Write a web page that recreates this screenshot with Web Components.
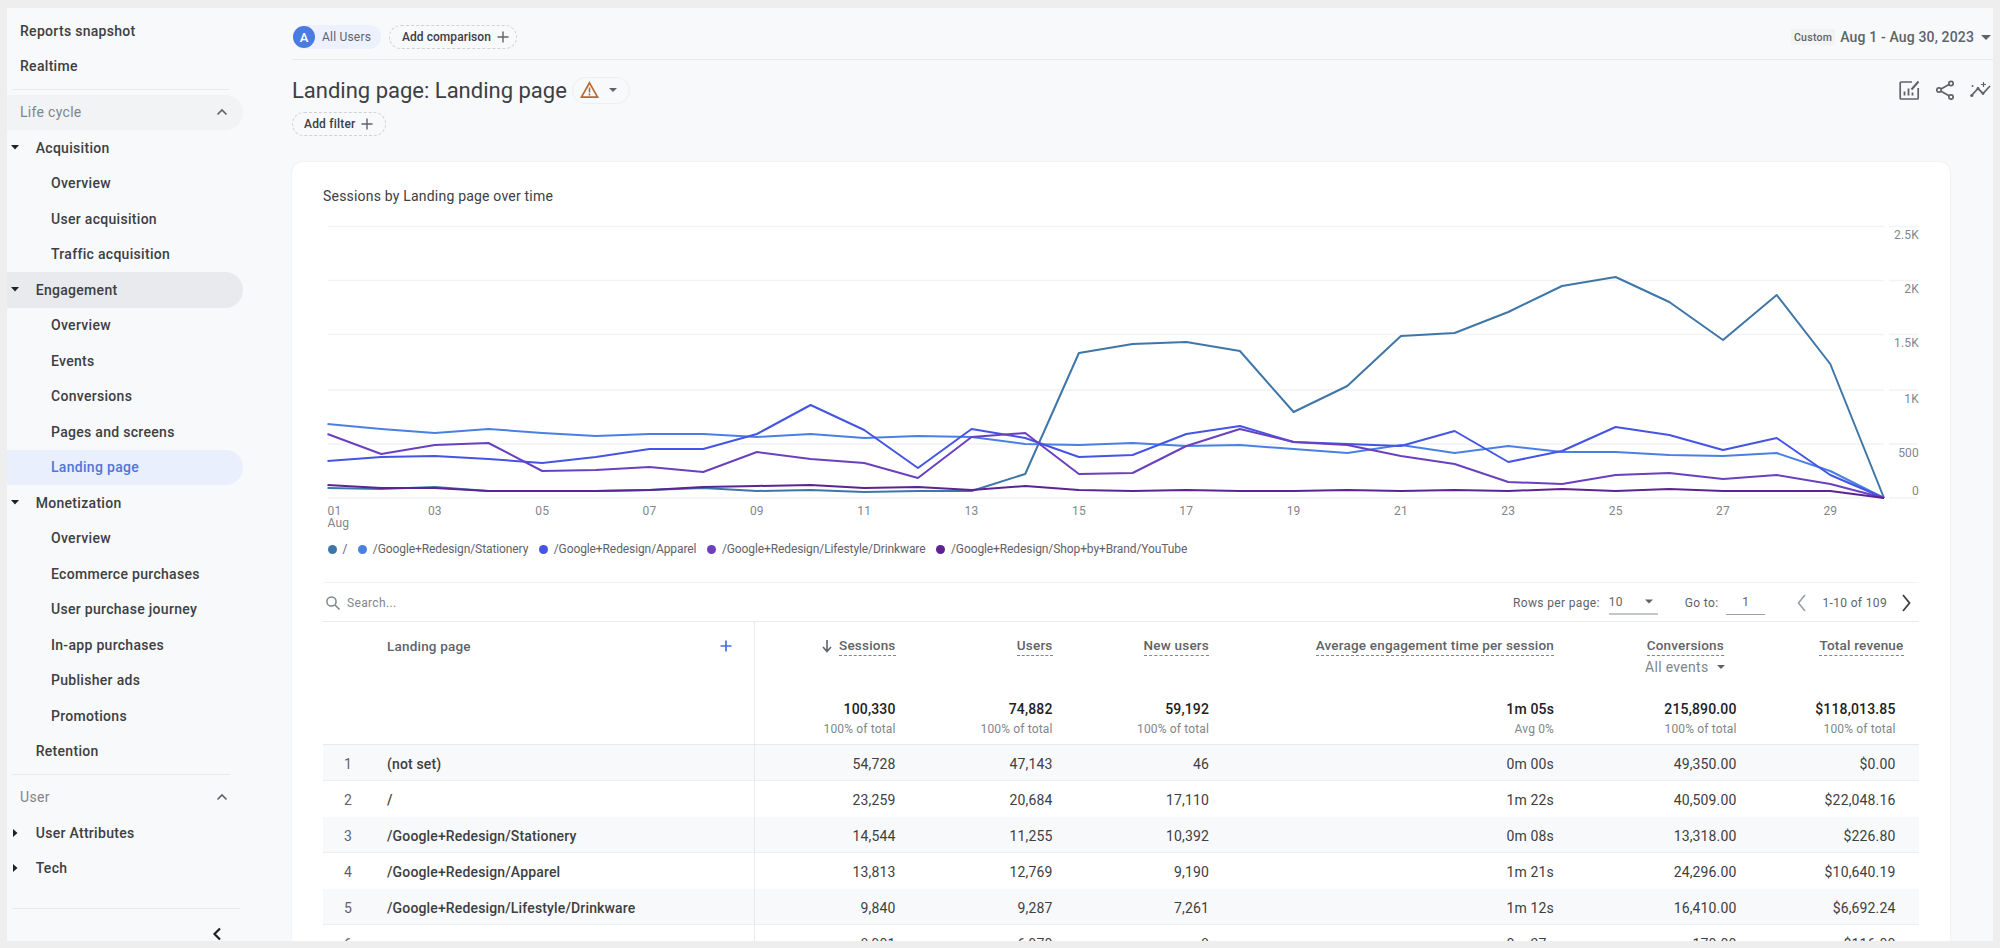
<!DOCTYPE html>
<html>
<head>
<meta charset="utf-8">
<title>Landing page</title>
<style>
  html, body { margin: 0; height: 100%; overflow: hidden; background: #eeeeee; }
  body { font-family: Roboto, "Noto Sans", sans-serif; }
</style>
</head>
<body>
<ga-app>
  <ga-sidebar slot="sidebar">
    <ga-nav-item level="0">Reports snapshot</ga-nav-item>
    <ga-nav-item level="0">Realtime</ga-nav-item>
    <ga-nav-divider></ga-nav-divider>
    <ga-nav-item level="0" heading chevron state="hover">Life cycle</ga-nav-item>
    <ga-nav-item level="1" caret="down">Acquisition</ga-nav-item>
    <ga-nav-item level="2">Overview</ga-nav-item>
    <ga-nav-item level="2">User acquisition</ga-nav-item>
    <ga-nav-item level="2">Traffic acquisition</ga-nav-item>
    <ga-nav-item level="1" caret="down" state="open">Engagement</ga-nav-item>
    <ga-nav-item level="2">Overview</ga-nav-item>
    <ga-nav-item level="2">Events</ga-nav-item>
    <ga-nav-item level="2">Conversions</ga-nav-item>
    <ga-nav-item level="2">Pages and screens</ga-nav-item>
    <ga-nav-item level="2" state="active">Landing page</ga-nav-item>
    <ga-nav-item level="1" caret="down">Monetization</ga-nav-item>
    <ga-nav-item level="2">Overview</ga-nav-item>
    <ga-nav-item level="2">Ecommerce purchases</ga-nav-item>
    <ga-nav-item level="2">User purchase journey</ga-nav-item>
    <ga-nav-item level="2">In-app purchases</ga-nav-item>
    <ga-nav-item level="2">Publisher ads</ga-nav-item>
    <ga-nav-item level="2">Promotions</ga-nav-item>
    <ga-nav-item level="1" caret="none">Retention</ga-nav-item>
    <ga-nav-divider></ga-nav-divider>
    <ga-nav-item level="0" heading chevron>User</ga-nav-item>
    <ga-nav-item level="1" caret="right">User Attributes</ga-nav-item>
    <ga-nav-item level="1" caret="right">Tech</ga-nav-item>
  </ga-sidebar>
  <ga-topbar></ga-topbar>
  <ga-title-row></ga-title-row>
  <ga-card>
    <ga-line-chart></ga-line-chart>
    <ga-legend></ga-legend>
    <ga-table-toolbar></ga-table-toolbar>
    <ga-table></ga-table>
  </ga-card>
</ga-app>

<script>
const PLUS = `<svg width="12" height="12" viewBox="0 0 12 12"><path d="M6 .5v11M.5 6h11" stroke="#5f6368" stroke-width="1.4" fill="none"/></svg>`;
const CARET = `<svg width="10" height="5" viewBox="0 0 10 5"><path d="M0 0h10L5 5z" fill="#5f6368"/></svg>`;

// colours and y values were read off the chart, in page pixels (one value per day of August)
const SERIES = [
  { name: '/', color: '#3f76a8', y: [489,490,488,492,492,492,491,489,492,491,493,492,492,475,354,345,343,352,413,387,337,334,313,287,278,303,341,296,365,499] },
  { name: '/Google+Redesign/Stationery', color: '#4a80e4', y: [425,430,434,430,434,437,435,435,438,435,439,437,438,445,446,444,447,446,450,454,446,454,447,453,453,456,457,454,472,499] },
  { name: '/Google+Redesign/Apparel', color: '#4554e2', y: [462,458,457,460,464,458,450,450,435,406,431,469,430,439,458,456,435,427,443,445,447,432,463,452,428,436,451,439,476,499] },
  { name: '/Google+Redesign/Lifestyle/Drinkware', color: '#6a40c0', y: [435,455,446,444,472,471,468,473,453,460,464,479,438,434,475,474,447,430,443,446,457,465,483,485,476,474,480,476,485,499] },
  { name: '/Google+Redesign/Shop+by+Brand/YouTube', color: '#5b2492', y: [486,489,489,492,492,492,491,488,487,486,489,488,491,487,491,492,491,492,492,491,492,491,492,490,492,490,492,492,492,499] }
];

class GaApp extends HTMLElement {
  constructor() {
    super();
    this.attachShadow({ mode: 'open' });
    this.shadowRoot.innerHTML = `
      <style>
        :host { display: block; box-sizing: border-box; height: 948px; padding: 8px 7px 7px; }
        .frame { height: 933px; background: #f8f9fb; display: grid; grid-template-columns: 285px 1fr; overflow: hidden; }
        .main { min-width: 0; display: flex; flex-direction: column; }
      </style>
      <div class="frame">
        <slot name="sidebar"></slot>
        <div class="main"><slot></slot></div>
      </div>`;
  }
}

class GaSidebar extends HTMLElement {
  constructor() {
    super();
    this.attachShadow({ mode: 'open' });
    this.shadowRoot.innerHTML = `
      <style>
        :host { display: block; padding-top: 5px; }
        .foot { margin: 21.5px 52px 0 5px; border-top: 1px solid #e8eaed; padding: 18px 18px 0 0; display: flex; justify-content: flex-end; }
      </style>
      <slot></slot>
      <div class="foot">
        <svg width="10" height="14" viewBox="0 0 10 14"><path d="M8 1.5L2.5 7 8 12.5" stroke="#202124" stroke-width="2.2" fill="none"/></svg>
      </div>`;
  }
}

class GaNavDivider extends HTMLElement {
  constructor() {
    super();
    this.attachShadow({ mode: 'open' });
    this.shadowRoot.innerHTML = `
      <style>
        :host { display: flex; align-items: center; height: 10.5px; padding: 0 62px 0 5px; }
        div { flex: 1; height: 1px; background: #e8eaed; }
      </style>
      <div></div>`;
  }
}

class GaNavItem extends HTMLElement {
  constructor() {
    super();
    this.attachShadow({ mode: 'open' });
    const caret = this.getAttribute('caret');
    let icon = '';
    if (caret === 'down') icon = '<svg width="8" height="5" viewBox="0 0 8 5"><path d="M0 0h8L4 4.5z" fill="#202124"/></svg>';
    if (caret === 'right') icon = '<svg width="5" height="8" viewBox="0 0 5 8"><path d="M0 0v8l4.5-4z" fill="#202124"/></svg>';
    const chevron = this.hasAttribute('chevron')
      ? '<svg class="chevron" width="12" height="8" viewBox="0 0 12 8"><path d="M1.5 6.5L6 2l4.5 4.5" stroke="#5f6368" stroke-width="1.6" fill="none"/></svg>'
      : '';
    this.shadowRoot.innerHTML = `
      <style>
        :host {
          display: flex; align-items: center; box-sizing: border-box;
          height: 35.5px; width: 236px; border-radius: 0 18px 18px 0;
          font-size: 14px; letter-spacing: 0.3px; color: #3c4043; font-weight: 500;
        }
        :host([level="0"]) { padding-left: 13px; }
        :host([level="1"]) { padding-left: 4px; }
        :host([level="2"]) { padding-left: 44px; }
        :host([heading]) { color: #80868b; font-weight: 400; }
        :host([state="hover"]) { background: #f1f3f4; }
        :host([state="open"]) { background: #e8eaed; }
        :host([state="active"]) { background: #e9effc; color: #4f76d8; }
        .caret { display: none; width: 8px; margin-right: 16.7px; justify-content: center; }
        :host([caret]) .caret { display: flex; }
        .chevron { margin-left: auto; margin-right: 15px; }
      </style>
      <span class="caret">${icon}</span>
      <slot></slot>
      ${chevron}`;
  }
}

class GaTopbar extends HTMLElement {
  constructor() {
    super();
    this.attachShadow({ mode: 'open' });
    this.shadowRoot.innerHTML = `
      <style>
        :host { display: flex; align-items: center; height: 52px; box-sizing: border-box; border-bottom: 1px solid #e8eaed; padding: 7px 0 0 1px; font-size: 12px; letter-spacing: 0.2px; white-space: nowrap; }
        .audience { display: flex; align-items: center; height: 24px; width: 88px; background: #ecf1fd; border-radius: 12px; color: #5f6368; box-sizing: border-box; }
        .avatar { width: 22px; height: 22px; border-radius: 50%; background: #4a7be0; color: #fff; font-weight: 500; font-size: 13px; display: flex; align-items: center; justify-content: center; margin-right: 7px; letter-spacing: 0; }
        .add { display: flex; align-items: center; height: 24px; width: 128px; box-sizing: border-box; margin-left: 8px; padding-left: 12px; border: 1px dashed #cfd2d6; border-radius: 12px; color: #3c4043; font-weight: 500; letter-spacing: 0.05px; }
        .add svg { margin-left: 6px; }
        .range { margin-left: auto; display: flex; align-items: center; color: #5f6368; padding-right: 2px; }
        .tag { background: #f1f3f4; font-size: 10.5px; font-weight: 500; letter-spacing: 0.3px; height: 16px; width: 44px; display: flex; align-items: center; justify-content: center; margin-right: 5px; }
        .date { font-size: 14px; font-weight: 500; letter-spacing: 0.15px; margin-right: 7px; }
      </style>
      <div class="audience"><span class="avatar">A</span>All Users</div>
      <div class="add">Add comparison ${PLUS}</div>
      <div class="range"><span class="tag">Custom</span><span class="date">Aug 1 - Aug 30, 2023</span>${CARET}</div>`;
  }
}

class GaTitleRow extends HTMLElement {
  constructor() {
    super();
    this.attachShadow({ mode: 'open' });
    this.shadowRoot.innerHTML = `
      <style>
        :host { display: block; padding-top: 16px; margin-bottom: 26px; }
        .row { display: flex; align-items: center; height: 28px; }
        h1 { margin: 0; font-size: 22px; font-weight: 400; color: #3c4043; white-space: nowrap; }
        .warn { display: flex; align-items: center; gap: 10px; height: 27px; width: 58px; box-sizing: border-box; margin-left: 5px; padding-left: 7px; border: 1px solid #eceef0; border-radius: 14px; }
        .actions { margin-left: auto; display: flex; align-items: center; padding-right: 2px; }
        .actions .share { margin: 0 16px 0 16px; }
        .filter { display: flex; align-items: center; width: 94px; height: 24px; box-sizing: border-box; margin-top: 8px; padding-left: 11px; border: 1px dashed #cfd2d6; border-radius: 12px; font-size: 12px; font-weight: 500; letter-spacing: 0.2px; color: #3c4043; }
        .filter svg { margin-left: 6px; }
      </style>
      <div class="row">
        <h1>Landing page: Landing page</h1>
        <div class="warn">
          <svg width="19" height="18" viewBox="0 0 19 18"><path d="M9.5 1.8L17.6 16.2H1.4z" fill="none" stroke="#b8682c" stroke-width="1.7"/><path d="M9.5 6.5v5M9.5 12.6v1.8" stroke="#b8682c" stroke-width="1.5"/></svg>
          ${CARET.replace('width="10" height="5"', 'width="8" height="4"')}
        </div>
        <div class="actions">
          <svg width="21" height="20" viewBox="0 0 21 20"><path d="M13 2H2.2a1 1 0 0 0-1 1v15a1 1 0 0 0 1 1h16a1 1 0 0 0 1-1V8" fill="none" stroke="#5f6368" stroke-width="1.7"/><path d="M5.5 15.5v-4M9.5 15.5v-7M13.5 15.5v-3" stroke="#5f6368" stroke-width="1.8"/><path d="M12.5 9.5L19.5 1.5" stroke="#5f6368" stroke-width="2"/></svg>
          <svg class="share" width="18" height="20" viewBox="0 0 18 20"><g fill="none" stroke="#5f6368" stroke-width="1.7"><circle cx="15" cy="3.5" r="2.2"/><circle cx="3" cy="10" r="2.2"/><circle cx="15" cy="17" r="2.2"/><path d="M5 9L13 4.6M5 11.2L13 15.8"/></g></svg>
          <svg width="21" height="16" viewBox="0 0 21 16"><path d="M1.5 13.5L8 6.5l5 5L20 4" fill="none" stroke="#5f6368" stroke-width="1.8"/><circle cx="1.8" cy="13.5" r="1.6" fill="#5f6368"/><circle cx="8" cy="6.5" r="1.4" fill="#5f6368"/><circle cx="13" cy="11.5" r="1.4" fill="#5f6368"/><path d="M13.5 0v5M11 2.5h5" stroke="#5f6368" stroke-width="1.2"/><circle cx="2.5" cy="4" r="1" fill="#5f6368"/></svg>
        </div>
      </div>
      <div class="filter">Add filter ${PLUS}</div>`;
  }
}

class GaCard extends HTMLElement {
  constructor() {
    super();
    this.attachShadow({ mode: 'open' });
    this.shadowRoot.innerHTML = `
      <style>
        :host { display: block; flex: 1; min-height: 0; overflow: hidden; margin-right: 43px; padding: 24px 31px 0; background: #fff; border-radius: 10px 10px 0 0; box-shadow: 0 0 2px rgba(60, 64, 67, 0.12); }
        h2 { margin: 0 0 13px; font-size: 14px; line-height: 20px; font-weight: 400; letter-spacing: 0.2px; color: #3c4043; }
      </style>
      <h2>Sessions by Landing page over time</h2>
      <slot></slot>`;
  }
}

class GaLineChart extends HTMLElement {
  constructor() {
    super();
    this.attachShadow({ mode: 'open' });
    const x0 = 327.5, x1 = 1884, step = (x1 - x0) / 29;
    const grid = [[227.5, '2.5K', 236], [281.5, '2K', 290], [335.5, '1.5K', 344], [391, '1K', 400], [445, '500', 454], [499, '0', 492]];
    const gridSvg = grid.map(([y, label, ty]) => `
      <path d="M${x0} ${y}H${x1}M1889 ${y}H1918" stroke="#f1f3f4" stroke-width="1.6"/>
      <text x="1919" y="${ty + 4}" text-anchor="end">${label}</text>`).join('');
    let days = '';
    for (let d = 1; d < 30; d += 2) {
      const x = x0 + (d - 1) * step;
      days += `<text x="${x}" y="516" text-anchor="${d === 1 ? 'start' : 'middle'}">${String(d).padStart(2, '0')}</text>`;
    }
    const lines = SERIES.map(s => {
      const pts = s.y.map((y, i) => `${(x0 + i * step).toFixed(1)},${y}`).join(' ');
      return `<polyline points="${pts}" fill="none" stroke="${s.color}" stroke-width="2" stroke-linejoin="round"/>`;
    }).join('');
    this.shadowRoot.innerHTML = `
      <style>
        :host { display: block; }
        svg { display: block; }
        text { font-size: 12px; fill: #80868b; letter-spacing: 0.2px; }
      </style>
      <svg width="1596" height="315" viewBox="323 220 1596 315">
        ${gridSvg}
        ${days}
        <text x="${x0}" y="528">Aug</text>
        ${lines}
      </svg>`;
  }
}

class GaLegend extends HTMLElement {
  constructor() {
    super();
    this.attachShadow({ mode: 'open' });
    const items = SERIES.map(s => `<span class="item"><i style="background:${s.color}"></i>${s.name}</span>`).join('');
    this.shadowRoot.innerHTML = `
      <style>
        :host { display: flex; align-items: center; box-sizing: border-box; height: 28px; margin-bottom: 20px; padding: 2px 0 0 5px; gap: 11px; font-size: 12px; letter-spacing: -0.1px; color: #5f6368; white-space: nowrap; }
        .item { display: flex; align-items: center; }
        .item:first-child { margin-right: -5px; }
        i { width: 9px; height: 9px; border-radius: 50%; margin-right: 5.5px; }
      </style>
      ${items}`;
  }
}

class GaTableToolbar extends HTMLElement {
  constructor() {
    super();
    this.attachShadow({ mode: 'open' });
    this.shadowRoot.innerHTML = `
      <style>
        :host { display: flex; align-items: center; box-sizing: border-box; height: 40px; padding: 1px 0 0 2px; border-top: 1px solid #f1f3f4; border-bottom: 1px solid #e8eaed; font-size: 12px; color: #5f6368; letter-spacing: 0.35px; }
        .search { color: #80868b; margin-left: 6px; }
        .right { margin-left: auto; display: flex; align-items: center; }
        .select { position: relative; width: 49px; height: 24px; margin: 0 27px 0 9px; border-bottom: 2px solid #c4c7ca; box-sizing: border-box; display: flex; align-items: center; justify-content: space-between; padding-right: 5px; }
        .goto { width: 39px; height: 24px; margin: 0 31px 0 8px; border-bottom: 1px solid #9aa0a6; box-sizing: border-box; display: flex; align-items: center; justify-content: center; }
        .pages { margin: 0 14px 0 15px; }
      </style>
      <svg width="16" height="16" viewBox="0 0 16 16"><circle cx="6.5" cy="6.5" r="4.6" fill="none" stroke="#80868b" stroke-width="1.5"/><path d="M10 10l4.5 4.5" stroke="#80868b" stroke-width="1.6"/></svg>
      <span class="search">Search...</span>
      <div class="right">
        <span>Rows per page:</span>
        <span class="select">10 ${CARET.replace('width="10" height="5"', 'width="8" height="5"')}</span>
        <span>Go to:</span>
        <span class="goto">1</span>
        <svg width="11" height="20" viewBox="0 0 11 20"><path d="M9 2L2.5 10 9 18" fill="none" stroke="#9aa0a6" stroke-width="1.6"/></svg>
        <span class="pages">1-10 of 109</span>
        <svg width="11" height="20" viewBox="0 0 11 20"><path d="M2 2l6.5 8L2 18" fill="none" stroke="#3c4043" stroke-width="1.8"/></svg>
        <span style="width:7px"></span>
      </div>`;
  }
}

class GaTable extends HTMLElement {
  constructor() {
    super();
    this.attachShadow({ mode: 'open' });
    this.rows = [
      ['(not set)', '54,728', '47,143', '46', '0m 00s', '49,350.00', '$0.00'],
      ['/', '23,259', '20,684', '17,110', '1m 22s', '40,509.00', '$22,048.16'],
      ['/Google+Redesign/Stationery', '14,544', '11,255', '10,392', '0m 08s', '13,318.00', '$226.80'],
      ['/Google+Redesign/Apparel', '13,813', '12,769', '9,190', '1m 21s', '24,296.00', '$10,640.19'],
      ['/Google+Redesign/Lifestyle/Drinkware', '9,840', '9,287', '7,261', '1m 12s', '16,410.00', '$6,692.24'],
      ['', '8,901', '6,970', '8', '0m 37s', '170.00', '$116.00']
    ];
    this.totals = [['100,330', '100% of total'], ['74,882', '100% of total'], ['59,192', '100% of total'], ['1m 05s', 'Avg 0%'], ['215,890.00', '100% of total'], ['$118,013.85', '100% of total']];
    this.headers = ['Sessions', 'Users', 'New users', 'Average engagement time per session', 'Conversions', 'Total revenue'];
    this.render();
  }

  render() {
    const headerCells = this.headers.map((h, i) => {
      const arrow = i === 0 ? '<svg width="12" height="14" viewBox="0 0 12 14"><path d="M6 1v11M2 8l4 4.5L10 8" fill="none" stroke="#5f6368" stroke-width="1.6"/></svg>' : '';
      const extra = i === 4 ? `<div class="events">All events ${CARET.replace('width="10" height="5"', 'width="8" height="4"')}</div>` : '';
      return `<div class="cell head h${i}"><div class="title">${arrow}<span>${h}</span></div>${extra}<div class="total">${this.totals[i][0]}</div><div class="sub">${this.totals[i][1]}</div></div>`;
    }).join('');
    const body = this.rows.map((r, i) => `
      <div class="row ${i % 2 === 0 ? 'odd' : ''}">
        <div class="label"><span class="idx">${i + 1}</span><span>${r[0]}</span></div>
        ${r.slice(1).map(v => `<div class="cell">${v}</div>`).join('')}
        <div></div>
      </div>`).join('');
    this.shadowRoot.innerHTML = `
      <style>
        :host { display: block; font-size: 14px; letter-spacing: 0.15px; color: #3c4043; --cols: 431.5px 141px 157px 156.5px 345px 182.5px 159px 24px; }
        .row { display: grid; grid-template-columns: var(--cols); height: 36px; box-sizing: border-box; align-items: stretch; }
        .row.odd { background: #f8f9fa; }
        .row:nth-child(odd) { border-bottom: 1px solid #eceef0; }
        .row > div { display: flex; align-items: center; padding-top: 2px; box-sizing: border-box; }
        .label { border-right: 1px solid #e8eaed; font-weight: 500; }
        .idx { width: 64px; padding-left: 21px; box-sizing: border-box; font-weight: 400; color: #5f6368; }
        .cell { justify-content: flex-end; }
        .header { display: grid; grid-template-columns: var(--cols); height: 123px; border-bottom: 1px solid #e8eaed; box-sizing: border-box; }
        .hlabel { border-right: 1px solid #e8eaed; padding: 16px 22px 0 64px; display: flex; justify-content: space-between; color: #5f6368; font-weight: 500; font-size: 13.5px; letter-spacing: 0.2px; }
        .head { position: relative; text-align: right; }
        .title { position: absolute; top: 14px; right: 0; display: flex; align-items: center; gap: 6px; font-size: 13.5px; font-weight: 500; letter-spacing: 0.2px; color: #5f6368; white-space: nowrap; }
        .title span { border-bottom: 1px dashed #80868b; line-height: 19px; }
        .h4 .title { right: 12.5px; }
        .h5 .title { right: -8px; }
        .events { position: absolute; top: 37px; right: 12px; display: flex; align-items: center; gap: 8px; color: #80868b; font-size: 14px; letter-spacing: 0.3px; white-space: nowrap; }
        .total { position: absolute; top: 79px; right: 0; font-weight: 500; color: #202124; white-space: nowrap; }
        .sub { position: absolute; top: 100px; right: 0; font-size: 12px; color: #80868b; white-space: nowrap; }
      </style>
      <div class="header">
        <div class="hlabel"><span>Landing page</span><svg style="margin-top:2px" width="12" height="12" viewBox="0 0 12 12"><path d="M6 .5v11M.5 6h11" stroke="#4a6fd8" stroke-width="1.7" fill="none"/></svg></div>
        ${headerCells}
        <div></div>
      </div>
      <div class="rows">${body}</div>`;
  }
}

customElements.define('ga-app', GaApp);
customElements.define('ga-sidebar', GaSidebar);
customElements.define('ga-nav-divider', GaNavDivider);
customElements.define('ga-nav-item', GaNavItem);
customElements.define('ga-topbar', GaTopbar);
customElements.define('ga-title-row', GaTitleRow);
customElements.define('ga-card', GaCard);
customElements.define('ga-line-chart', GaLineChart);
customElements.define('ga-legend', GaLegend);
customElements.define('ga-table-toolbar', GaTableToolbar);
customElements.define('ga-table', GaTable);
</script>
</body>
</html>
